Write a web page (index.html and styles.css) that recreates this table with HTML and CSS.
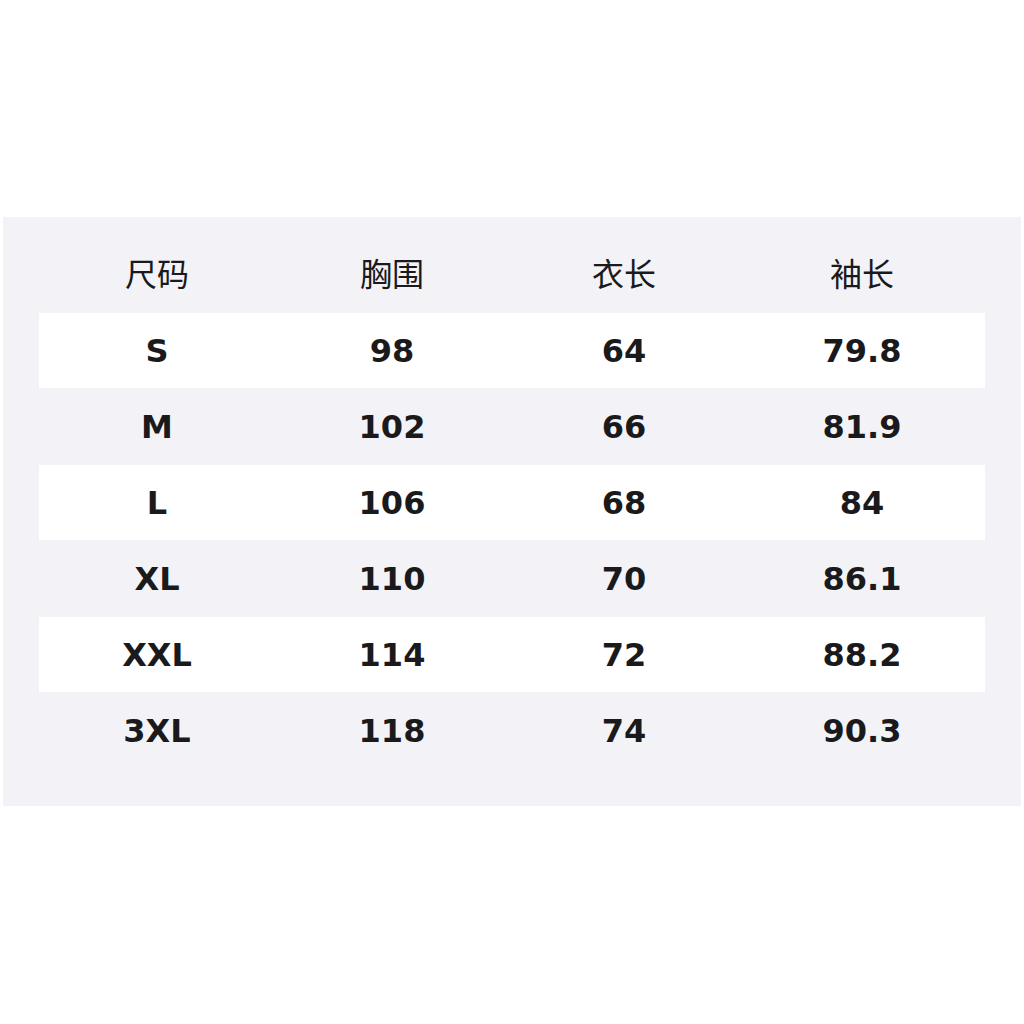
FILE: index.html
```html
<!DOCTYPE html>
<html lang="zh">
<head>
<meta charset="utf-8">
<link rel="stylesheet" href="styles.css">
</head>
<body>
<div class="page">
  <div class="panel">
    <div class="row head">
      <div class="cell">尺码</div><div class="cell">胸围</div><div class="cell">衣长</div><div class="cell">袖长</div>
    </div>
    <div class="row odd">
      <div class="cell">S</div><div class="cell">98</div><div class="cell">64</div><div class="cell">79.8</div>
    </div>
    <div class="row even">
      <div class="cell">M</div><div class="cell">102</div><div class="cell">66</div><div class="cell">81.9</div>
    </div>
    <div class="row odd">
      <div class="cell">L</div><div class="cell">106</div><div class="cell">68</div><div class="cell">84</div>
    </div>
    <div class="row even">
      <div class="cell">XL</div><div class="cell">110</div><div class="cell">70</div><div class="cell">86.1</div>
    </div>
    <div class="row odd">
      <div class="cell">XXL</div><div class="cell">114</div><div class="cell">72</div><div class="cell">88.2</div>
    </div>
    <div class="row even">
      <div class="cell">3XL</div><div class="cell">118</div><div class="cell">74</div><div class="cell">90.3</div>
    </div>
  </div>
</div>
</body>
</html>
```
FILE: styles.css
```css
html, body {
  margin: 0;
  padding: 0;
  background: #ffffff;
}
.page {
  width: 1024px;
  height: 1024px;
  padding-top: 217px;
  box-sizing: border-box;
}
.panel {
  margin-left: 3px;
  width: 1018px;
  box-sizing: border-box;
  background: #f3f3f7;
  padding: 20px 36px 37px 36px;
}
.row {
  display: grid;
  grid-template-columns: 236px 234px 230px 246px;
  align-items: center;
  color: #1a1a1c;
}
.cell {
  text-align: center;
}
.head {
  height: 76px;
  font-family: "Noto Sans CJK SC", "DejaVu Sans", sans-serif;
  font-size: 32px;
  font-weight: 400;
  padding-bottom: 7px;
  box-sizing: border-box;
}
.odd, .even {
  font-family: "DejaVu Sans", "Noto Sans", sans-serif;
  font-weight: 700;
  font-size: 32px;
}
.odd {
  height: 75px;
  background: #ffffff;
}
.even {
  height: 77px;
}
```
